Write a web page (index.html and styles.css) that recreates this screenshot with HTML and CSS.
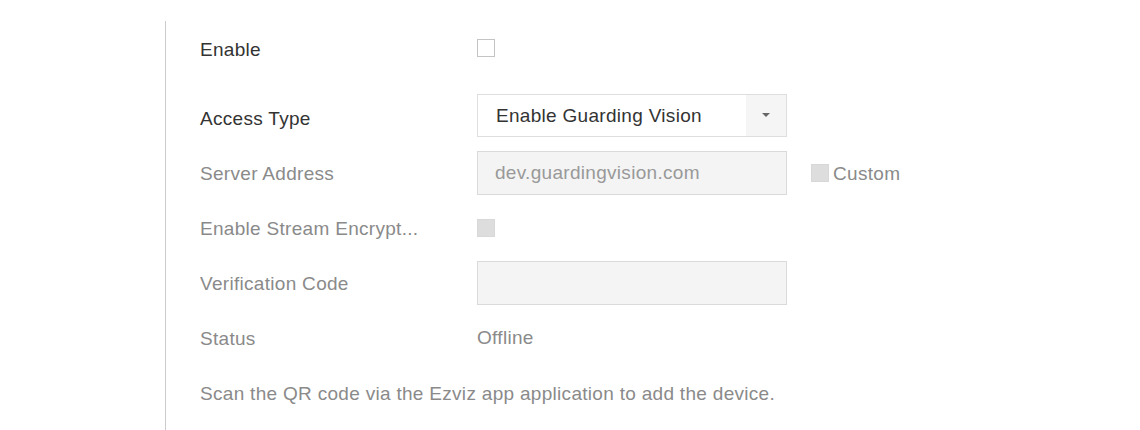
FILE: index.html
```html
<!DOCTYPE html>
<html>
<head>
<meta charset="utf-8">
<link rel="stylesheet" href="styles.css">
</head>
<body>
<div class="panel">
  <div class="row row-first">
    <div class="label">Enable</div>
    <div class="control"><span class="checkbox"></span></div>
  </div>
  <div class="row">
    <div class="label">Access Type</div>
    <div class="control">
      <div class="select">
        <span class="select-text">Enable Guarding Vision</span>
        <span class="select-arrow"><span class="tri"></span></span>
      </div>
    </div>
  </div>
  <div class="row">
    <div class="label muted">Server Address</div>
    <div class="control">
      <div class="input disabled">dev.guardingvision.com</div>
      <span class="checkbox off"></span><span class="custom">Custom</span>
    </div>
  </div>
  <div class="row">
    <div class="label muted">Enable Stream Encrypt...</div>
    <div class="control"><span class="checkbox off"></span></div>
  </div>
  <div class="row">
    <div class="label muted">Verification Code</div>
    <div class="control"><div class="input disabled"></div></div>
  </div>
  <div class="row">
    <div class="label muted">Status</div>
    <div class="control"><span class="muted">Offline</span></div>
  </div>
  <div class="row">
    <div class="note muted">Scan the QR code via the Ezviz app application to add the device.</div>
  </div>
</div>
</body>
</html>
```

FILE: styles.css
```css
html, body {
  margin: 0;
  padding: 0;
  background: #ffffff;
}
body {
  font-family: "Liberation Sans", Arial, sans-serif;
  font-size: 19px;
  letter-spacing: 0.3px;
  color: #333333;
}
.panel {
  margin-left: 165px;
  margin-top: 21px;
  height: 409px;
  border-left: 1px solid #cccccc;
  padding-left: 34px;
  box-sizing: border-box;
}
.row {
  display: flex;
  align-items: center;
  height: 55px;
}
.row-first {
  height: 56px;
  margin-bottom: 13px;
}
.label {
  width: 277px;
  flex: none;
  padding-top: 3px;
}
.row-first .label {
  padding-top: 1px;
}
.muted {
  color: #8a8a8a;
}
.control {
  display: flex;
  align-items: center;
}
.row-first .checkbox {
  margin-top: -3px;
}
.checkbox {
  display: inline-block;
  width: 18px;
  height: 18px;
  box-sizing: border-box;
  border: 1px solid #c4c4c4;
  background: #ffffff;
}
.checkbox.off {
  border-color: #d8d8d8;
  background: #dddddd;
}
.select {
  width: 310px;
  height: 43px;
  box-sizing: border-box;
  border: 1px solid #dedede;
  background: #ffffff;
  display: flex;
  align-items: center;
  margin-top: -5px;
}
.select-text {
  flex: 1;
  padding-left: 18px;
  padding-top: 2px;
}
.select-arrow {
  width: 40px;
  height: 100%;
  background: #f5f5f5;
  display: flex;
  align-items: center;
  justify-content: center;
}
.tri {
  width: 0;
  height: 0;
  border-left: 4px solid transparent;
  border-right: 4px solid transparent;
  border-top: 4px solid #666666;
}
.input {
  width: 310px;
  height: 44px;
  box-sizing: border-box;
  border: 1px solid #dadada;
  padding-left: 17px;
  padding-top: 1px;
  display: flex;
  align-items: center;
}
.input.disabled {
  background: #f4f4f4;
  color: #999999;
}
.control .input + .checkbox {
  margin-left: 24px;
}
.custom {
  margin-left: 4px;
  padding-top: 2px;
  color: #8a8a8a;
}
.note {
  padding-top: 3px;
}
```
